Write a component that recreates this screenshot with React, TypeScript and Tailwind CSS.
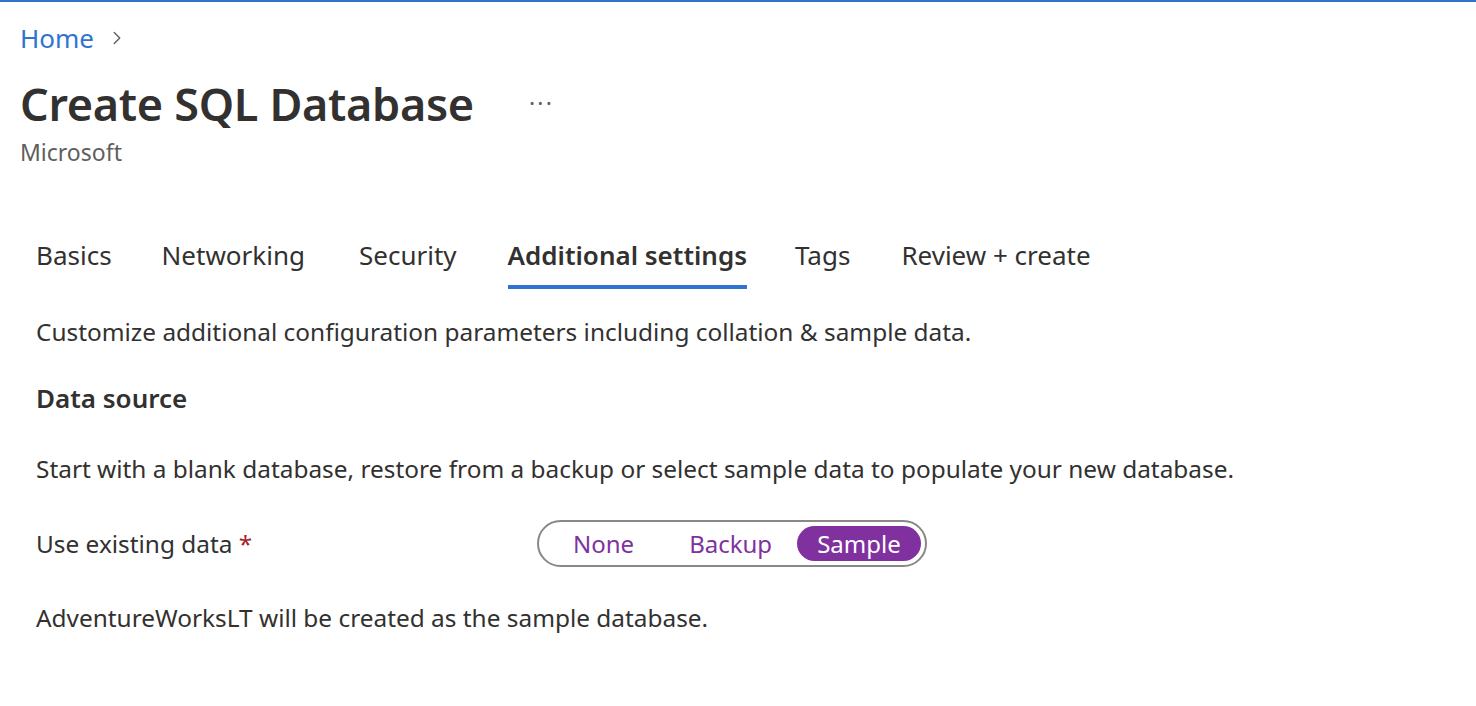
import { ChevronRight } from "lucide-react";

const tabs = [
  { label: "Basics", cls: "" },
  { label: "Networking", cls: "ml-[50px]" },
  { label: "Security", cls: "ml-[54px]" },
  { label: "Additional settings", cls: "ml-[51px]" },
  { label: "Tags", cls: "ml-[48px]" },
  { label: "Review + create", cls: "ml-[51px]" },
];

export default function App() {
  const active = "Additional settings";

  return (
    <div
      className="min-h-[706px] w-full bg-white border-t-2 border-[#2f74c9] text-[#323130]"
      style={{ fontFamily: '"Noto Sans", "Open Sans", sans-serif' }}
    >
      {/* header */}
      <div className="pl-5 pt-[18px]">
        <div className="flex items-center gap-3 text-[26px] leading-[36px]">
          <span className="text-[#2f74d0]">Home</span>
          <ChevronRight size={22} strokeWidth={1.5} className="text-[#605e5c]" />
        </div>
        <div className="mt-[20px] flex items-center">
          <h1 className="text-[45px] leading-[56px] font-semibold tracking-[-0.3px]">Create SQL Database</h1>
          <span className="ml-[55px] text-[23px] text-[#605e5c] -mt-0.5 tracking-widest">···</span>
        </div>
        <div className="mt-[5px] text-[23px] leading-[30px] text-[#605e5c]">Microsoft</div>
      </div>

      {/* tabs */}
      <div className="mt-[70px] pl-9 flex">
        {tabs.map((t) => (
          <div key={t.label} className={`flex flex-col ${t.cls}`}>
            <span className={`text-[26px] leading-[36px] ${t.label === active ? "font-semibold" : ""}`}>
              {t.label}
            </span>
            <div className={`mt-[12px] h-1 ${t.label === active ? "bg-[#2f74d0]" : "bg-transparent"}`} />
          </div>
        ))}
      </div>

      {/* content */}
      <div className="pl-9 text-[24.4px] leading-[32px]">
        <p className="mt-[27px]">Customize additional configuration parameters including collation &amp; sample data.</p>
        <h2 className="mt-[34px] text-[26px] font-semibold">Data source</h2>
        <p className="mt-[39px]">
          Start with a blank database, restore from a backup or select sample data to populate your new database.
        </p>
        <div className="mt-[35px] flex items-center">
          <span className="w-[501px]">
            Use existing data <span className="text-[#a4262c]">*</span>
          </span>
          <div className="flex items-center h-[47px] rounded-full border-2 border-[#8a8886] pl-[14px] pr-[4px] text-[24px] text-[#80319f]">
            <span className="h-[35px] flex items-center rounded-full px-5 mr-[15px]">None</span>
            <span className="h-[35px] flex items-center rounded-full px-5 mr-[5px]">Backup</span>
            <span className="h-[35px] flex items-center rounded-full px-5 bg-[#80319f] text-white">Sample</span>
          </div>
        </div>
        <p className="mt-[35px]">AdventureWorksLT will be created as the sample database.</p>
      </div>
    </div>
  );
}
